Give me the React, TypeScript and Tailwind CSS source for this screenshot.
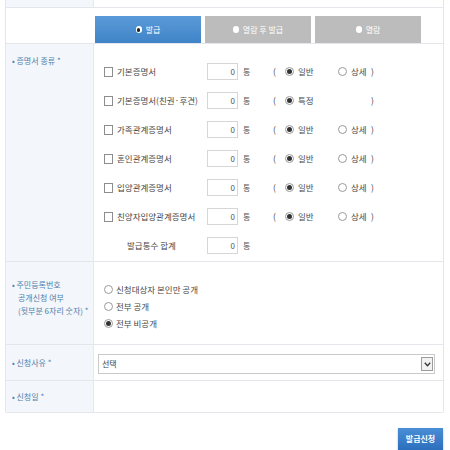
import React from "react";

const font = { fontFamily: '"Noto Sans CJK KR", "Noto Sans", sans-serif' };

function Radio({ on }: { on?: boolean }) {
  return (
    <span className="inline-flex items-center justify-center w-[9px] h-[9px] rounded-full border border-[#9a9a9a] bg-white">
      {on && <span className="w-[5px] h-[5px] rounded-full bg-[#333]" />}
    </span>
  );
}

function Box() {
  return <span className="inline-block w-[9px] h-[10px] border border-[#8d8d8d] bg-white" />;
}

function Count() {
  return (
    <div className="flex items-center">
      <div className="w-[31px] h-[17px] border border-[#d6d6d6] bg-white flex items-center justify-end pr-[2px] text-[8px] text-[#555]">
        0
      </div>
      <span className="ml-[5px] text-[8px] text-[#555]">통</span>
    </div>
  );
}

const certs = [
  { name: "기본증명서", kind: "일반", detail: true },
  { name: "기본증명서(친권·후견)", kind: "특정", detail: false },
  { name: "가족관계증명서", kind: "일반", detail: true },
  { name: "혼인관계증명서", kind: "일반", detail: true },
  { name: "입양관계증명서", kind: "일반", detail: true },
  { name: "친양자입양관계증명서", kind: "일반", detail: true },
];

function Label({ children }: { children: React.ReactNode }) {
  return (
    <div className="w-[88px] shrink-0 bg-[#f3f6fa] border-r border-[#e6eaef] pl-[6px] text-[8px] text-[#4f7fae] leading-[13px]">
      {children}
    </div>
  );
}

export default function App() {
  return (
    <div className="w-[450px] h-[450px] bg-white overflow-hidden" style={font}>
      <div className="ml-[5px] w-[439px] border-x border-b border-[#e3e7ec] rounded-b-[2px]">
        {/* previous row remnant */}
        <div className="flex h-[8px] border-b border-[#e3e7ec]">
          <div className="w-[88px] bg-[#f3f6fa] border-r border-[#e6eaef]" />
        </div>

        {/* tabs */}
        <div className="flex h-[36px] border-b border-[#e3e7ec]">
          <div className="w-[88px] bg-white" />
          <div className="flex gap-[4px] pt-[8px] pl-[1px]">
            <div className="w-[106px] h-[27px] bg-gradient-to-b from-[#5b9ad8] to-[#3f84c8] flex items-center justify-center gap-[4px] text-[8px] text-white">
              <span className="w-[6px] h-[7px] rounded-full bg-white flex items-center justify-center">
                <span className="w-[3px] h-[4px] rounded-full bg-[#222]" />
              </span>
              발급
            </div>
            <div className="w-[106px] h-[27px] bg-[#bcbcbc] flex items-center justify-center gap-[4px] text-[8px] text-white">
              <span className="w-[6px] h-[7px] rounded-full bg-white" />
              열람 후 발급
            </div>
            <div className="w-[106px] h-[27px] bg-[#bcbcbc] flex items-center justify-center gap-[4px] text-[8px] text-white">
              <span className="w-[6px] h-[7px] rounded-full bg-white" />
              열람
            </div>
          </div>
        </div>

        {/* certificate types */}
        <div className="flex h-[218px] border-b border-[#e3e7ec]">
          <Label>
            <div className="pt-[10px]">• 증명서 종류 *</div>
          </Label>
          <div className="pt-[13px] pl-[10px] text-[8.5px] text-[#484848]">
            {certs.map((c) => (
              <div key={c.name} className="flex items-center h-[29px]">
                <div className="w-[103px] flex items-center gap-[4px]">
                  <Box />
                  <span>{c.name}</span>
                </div>
                <div className="w-[66px]">
                  <Count />
                </div>
                <span>(</span>
                <div className="ml-[9px] w-[53px] flex items-center gap-[4px]">
                  <Radio on />
                  <span>{c.kind}</span>
                </div>
                <div className="w-[33px] flex items-center gap-[4px]">
                  {c.detail && (
                    <>
                      <Radio />
                      <span>상세</span>
                    </>
                  )}
                </div>
                <span>)</span>
              </div>
            ))}
            <div className="flex items-center h-[29px]">
              <div className="w-[103px] pl-[23px]">발급통수 합계</div>
              <Count />
            </div>
          </div>
        </div>

        {/* resident number */}
        <div className="flex h-[83px] border-b border-[#e3e7ec]">
          <Label>
            <div className="pt-[16px]">
              <div>• 주민등록번호</div>
              <div className="pl-[6px]">공개신청 여부</div>
              <div className="pl-[6px]">(뒷부분 6자리 숫자) *</div>
            </div>
          </Label>
          <div className="pt-[21px] pl-[10px] text-[8.5px] text-[#484848] flex flex-col gap-[4px]">
            <div className="flex items-center gap-[3px] h-[13px]">
              <Radio />
              신청대상자 본인만 공개
            </div>
            <div className="flex items-center gap-[3px] h-[13px]">
              <Radio />
              전부 공개
            </div>
            <div className="flex items-center gap-[3px] h-[13px]">
              <Radio on />
              전부 비공개
            </div>
          </div>
        </div>

        {/* reason */}
        <div className="flex h-[36px] border-b border-[#e3e7ec]">
          <Label>
            <div className="pt-[11px]">• 신청사유 *</div>
          </Label>
          <div className="pt-[9px] pl-[4px]">
            <div className="w-[337px] h-[20px] border border-[#c9c9c9] bg-white flex items-center justify-between pl-[3px] pr-[1px] text-[8px] text-[#444]">
              <span>선택</span>
              <span className="w-[12px] h-[14px] border border-[#9c9c9c] bg-[#f2f2f2] flex items-center justify-center">
                <svg width="7" height="5" viewBox="0 0 7 5">
                  <path d="M0.8 0.8 L3.5 3.8 L6.2 0.8" fill="none" stroke="#333" strokeWidth="1.3" />
                </svg>
              </span>
            </div>
          </div>
        </div>

        {/* date */}
        <div className="flex h-[31px]">
          <Label>
            <div className="pt-[9px]">• 신청일 *</div>
          </Label>
        </div>
      </div>

      <div className="flex justify-end pr-[7px] pt-[15px]">
        <div className="w-[45px] h-[22px] bg-gradient-to-b from-[#4a8ed6] to-[#2c6fbd] text-white text-[8px] font-bold flex items-center justify-center shadow-[0_1px_2px_rgba(0,0,0,0.3)]">
          발급신청
        </div>
      </div>
    </div>
  );
}
